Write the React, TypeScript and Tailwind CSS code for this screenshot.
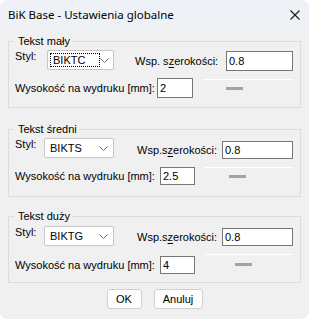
import type { ReactNode } from 'react'

const ui = "font-['Liberation_Sans',Arial,sans-serif] text-[11px] leading-[13px] text-black"

function Chevron() {
  return (
    <svg width="9" height="5" viewBox="0 0 9 5" className="shrink-0">
      <path d="M0.5 0.5 L4.5 4.5 L8.5 0.5" fill="none" stroke="#6b6b6b" strokeWidth="1" />
    </svg>
  )
}

function Combo({ value, focused, w }: { value: string; focused?: boolean; w: string }) {
  return (
    <div className={`${w} h-[20px] shrink-0 flex items-center justify-between rounded-[2px] border border-[#c6c6c6] bg-white pl-[2px] pr-[5px]`}>
      {focused ? (
        <span className="border border-dotted border-black pl-[2px] pr-[14px] leading-[12px]">{value}</span>
      ) : (
        <span className="pl-[3px]">{value}</span>
      )}
      <Chevron />
    </div>
  )
}

function Field({ value, w, h }: { value: string; w: string; h: string }) {
  return (
    <div className={`${w} ${h} shrink-0 flex items-center border border-[#767676] bg-white pl-[2px]`}>
      {value}
    </div>
  )
}

type GroupProps = {
  title: string
  styl: string
  wsp: string
  wys: string
  focused?: boolean
  wspLabel: ReactNode
  box: string
  stylW: string
  comboW: string
  right: string
  inputW: string
  inputH: string
  row2: string
  wysW: string
  wysInputW: string
  wysInputH: string
  sepBox: string
  dashBox: string
}

function Group(p: GroupProps) {
  return (
    <fieldset className={`mx-[8px] border border-[#dcdcdc] px-[6px] pr-[7px] ${p.box}`}>
      <legend className="-ml-[1px] pl-[4px] pr-[2px] leading-[14px]">{p.title}</legend>
      <div className="flex items-start">
        <div className={`${p.stylW} shrink-0`}>Styl:</div>
        <Combo value={p.styl} focused={p.focused} w={p.comboW} />
        <div className={`flex flex-1 items-center justify-between ${p.right}`}>
          <span>{p.wspLabel}</span>
          <Field value={p.wsp} w={p.inputW} h={p.inputH} />
        </div>
      </div>
      <div className={`flex items-start ${p.row2}`}>
        <div className={`${p.wysW} ${p.wysInputH} shrink-0 flex items-center`}>Wysokość na wydruku [mm]:</div>
        <Field value={p.wys} w={p.wysInputW} h={p.wysInputH} />
        <div className={`flex-1 flex flex-col ${p.sepBox}`}>
          <div className="h-px bg-white" />
          <div className={`h-[3px] w-[17px] bg-[#a3a3a3] ${p.dashBox}`} />
        </div>
      </div>
    </fieldset>
  )
}

const wspUl = (dot: boolean) => (
  <>
    {dot ? 'Wsp. s' : 'Wsp.s'}
    <span className="underline underline-offset-[2px]">z</span>
    erokości:
  </>
)

export default function App() {
  return (
    <div className="min-h-screen w-[309px] bg-white">
      <div className={`h-[319px] w-[309px] overflow-hidden rounded-[8px] bg-[#f0f0f0] ${ui}`}>
        {/* pasek tytułu */}
        <div className="flex h-[30px] items-center justify-between bg-[#eef2f7] pl-[8px] pr-[9px]">
          <span className="font-['Noto_Sans',sans-serif] text-[11.5px] leading-[16px]">BiK Base - Ustawienia globalne</span>
          <svg width="10" height="10" viewBox="0 0 10 10">
            <path d="M0.5 0.5 L9.5 9.5 M9.5 0.5 L0.5 9.5" stroke="#1a1a1a" strokeWidth="1.1" />
          </svg>
        </div>

        <Group
          title="Tekst mały"
          styl="BIKTC"
          focused
          wsp="0.8"
          wys="2"
          wspLabel={wspUl(true)}
          box="mt-[4px] pt-[2px] pb-[9px]"
          stylW="w-[32px]"
          comboW="w-[67px]"
          right="ml-[21px] mt-[1px]"
          inputW="w-[67px]"
          inputH="h-[20px]"
          row2="mt-[7px]"
          wysW="w-[142px]"
          wysInputW="w-[36px]"
          wysInputH="h-[20px]"
          sepBox="ml-[10px] mt-[1px]"
          dashBox="ml-[23px] mt-[7px]"
        />

        <Group
          title="Tekst średni"
          styl="BIKTS"
          wsp="0.8"
          wys="2.5"
          wspLabel={wspUl(false)}
          box="mt-[14px] pt-[2px] pb-[11px]"
          stylW="w-[29px]"
          comboW="w-[70px]"
          right="ml-[23px] mt-[3px]"
          inputW="w-[71px]"
          inputH="h-[18px]"
          row2="mt-[8px]"
          wysW="w-[145px]"
          wysInputW="w-[35px]"
          wysInputH="h-[18px]"
          sepBox="ml-[9px]"
          dashBox="ml-[25px] mt-[7px]"
        />

        <Group
          title="Tekst duży"
          styl="BIKTG"
          wsp="0.8"
          wys="4"
          wspLabel={wspUl(false)}
          box="mt-[12px] pt-[3px] pb-[8px]"
          stylW="w-[29px]"
          comboW="w-[70px]"
          right="ml-[23px] mt-[2px]"
          inputW="w-[71px]"
          inputH="h-[18px]"
          row2="mt-[10px]"
          wysW="w-[145px]"
          wysInputW="w-[35px]"
          wysInputH="h-[18px]"
          sepBox="ml-[9px] -mt-[2px]"
          dashBox="ml-[31px] mt-[8px]"
        />

        <div className="mt-[6px] flex justify-center gap-[12px]">
          <button className="h-[20px] w-[35px] rounded-[3px] border border-[#d0d0d0] bg-[#fdfdfd]">OK</button>
          <button className="h-[20px] w-[49px] rounded-[3px] border border-[#d0d0d0] bg-[#fdfdfd]">Anuluj</button>
        </div>
      </div>
    </div>
  )
}
